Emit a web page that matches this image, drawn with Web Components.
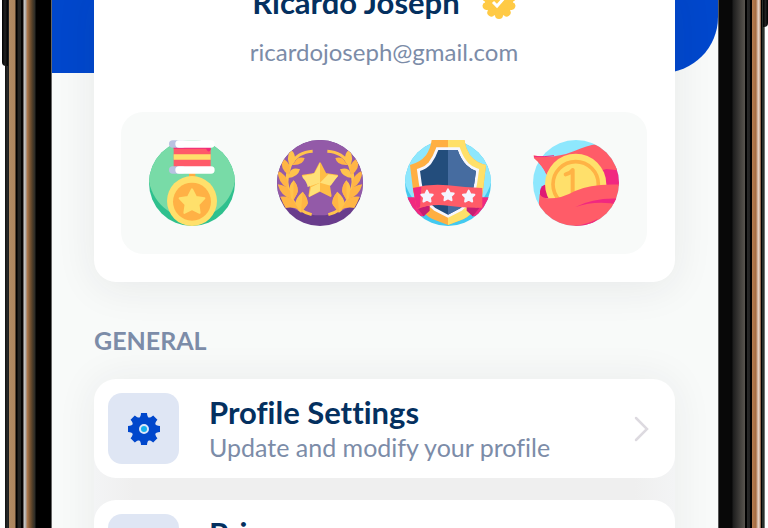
<!DOCTYPE html>
<html lang="en">
<head>
<meta charset="utf-8">
<title>Profile</title>
<style>
body { margin: 0; background: #fff; font-family: Lato, "Open Sans", sans-serif; font-variant-ligatures: none; color: #04305f; --muted: #7c8ca8; --blue: #0047cc; --soft: #f8faf9; }
</style>
</head>
<body>
<phone-frame>
  <profile-hero name="Ricardo Joseph" email="ricardojoseph@gmail.com">
    <medal-icon kind="ribbon"></medal-icon>
    <medal-icon kind="laurel"></medal-icon>
    <medal-icon kind="shield"></medal-icon>
    <medal-icon kind="coin"></medal-icon>
  </profile-hero>
  <settings-section heading="General">
    <settings-row>Profile Settings<span slot="detail">Update and modify your profile</span><gear-icon slot="icon"></gear-icon></settings-row>
    <settings-row>Privacy</settings-row>
  </settings-section>
</phone-frame>
<script>
class BaseElement extends HTMLElement {
  connectedCallback() {
    if (this.shadowRoot) return;
    this.attachShadow({ mode: 'open' }).innerHTML = this.render();
  }
}

customElements.define('phone-frame', class extends BaseElement {
  render() {
    return `<style>
      :host { display: flex; height: 100vh; overflow: hidden; }
      .edge { flex: none; position: relative; }
      .left { width: 52px; background: linear-gradient(90deg, #fff 5px, #111 5px, #2b2c2c 8px, #111 9px, #b08a63 9px, #ab845d 15px, #000 16px, #000 17px, #222322 18px, #222322 21px, #000 21px, #0a0404 23px, #cfcdcb 24px, #aaa5a2 26px, #b37c50 27px, #7a5532 30px, #453827 33px, #2a2b28 35px, #000 36px, #000 51px, #666 51px); }
      .right { width: 50px; background: linear-gradient(90deg, #555 1px, #080808 1px, #080808 14px, #1d1d1d 15px, #59554f 27px, #000 27px, #000 29px, #292929 29px, #222 32px, #000 32px, #000 34px, #b47c50 34px, #a46c42 38px, #c9a48b 39px, #eadbd1 41px, #b98a6b 42px, #6e4a33 43px, #000 43px, #000 44px, #2b302b 44px, #2b302b 46px, #bbb 47px, #fff 47px); }
      .key { position: absolute; top: 0; background: linear-gradient(90deg, #000, #222 50%, #000); }
      .left .key { left: 2px; width: 6px; height: 66px; border-radius: 0 0 0 4px; }
      .right .key { right: 0; width: 5px; height: 27px; border-radius: 0 0 4px 0; }
      .screen { flex: 1; min-width: 0; display: grid; grid-template: auto 1fr / 100%; background: var(--soft); overflow: hidden; }
      .banner { grid-area: 1 / 1; align-self: start; height: 73px; background: var(--blue); border-radius: 0 0 56px 0; }
      main { grid-area: 1 / 1 / 3 / 2; padding: 0 43px 0 42px; position: relative; }
    </style>
    <div class="edge left"><div class="key"></div></div>
    <div class="screen"><div class="banner"></div><main><slot></slot></main></div>
    <div class="edge right"><div class="key"></div></div>`;
  }
});

customElements.define('profile-hero', class extends BaseElement {
  render() {
    return `<style>
      :host { display: block; background: #fff; padding: 0 28px 28px 27px; border-radius: 0 0 22px 22px; box-shadow: 0 6px 40px rgba(40,40,55,.08); }
      .name { display: flex; justify-content: center; align-items: center; gap: 22px; margin-top: -16px; }
      h1 { margin: 0; font-size: 31px; line-height: 36px; font-weight: 700; }
      svg { display: block; width: 34px; height: 34px; }
      a { display: block; text-align: center; text-decoration: none; color: var(--muted); font-size: 24px; line-height: 32px; margin-top: 16px; }
      .badges { display: flex; justify-content: space-between; background: var(--soft); border-radius: 22px; padding: 28px; margin-top: 44px; }
    </style>
    <div class="name"><h1>${this.getAttribute('name')}</h1>
      <svg viewBox="-17 -17 34 34" role="img" aria-label="Verified"><g fill="#ffca45"><circle r="14"/>
      ${Array.from({ length: 10 }, (_, i) => `<circle cx="0" cy="13" r="4" transform="rotate(${i * 36})"/>`).join('')}</g>
      <path d="M-6 0L-2 4L6-5" fill="none" stroke="#fff" stroke-width="3"/></svg></div>
    <a href="mailto:${this.getAttribute('email')}">${this.getAttribute('email')}</a>
    <div class="badges"><slot></slot></div>`;
  }
});

const star = (x, y, r, fill, k = 0.5) => {
  const p = Array.from({ length: 10 }, (_, i) => {
    const a = (i * 36 - 90) * Math.PI / 180, q = i % 2 ? r * k : r;
    return `${(x + q * Math.cos(a)).toFixed(1)},${(y + q * Math.sin(a)).toFixed(1)}`;
  }).join(' ');
  return `<polygon points="${p}" fill="${fill}" stroke="${fill}" stroke-width="6" stroke-linejoin="round"/>`;
};

const laurelSide = `<path d="M134 63Q88 65 67 105Q45 155 70 205Q90 243 131 253" fill="none" stroke="#ffc34c" stroke-width="9"/>
  <path d="M67 57Q84 70 81 91Q77 102 68 108Q52 88 67 57Z" fill="#ffc34c"/>
  <path d="M83 91Q91 78 110 83Q105 106 73 104Z" fill="#ffb545"/>
  <path d="M42 83Q61 93 65 108Q67 122 62 133Q35 118 42 83Z" fill="#ffb545"/>
  <path d="M65 126Q72 110 96 117Q90 141 59 143Z" fill="#ffc34c"/>
  <path d="M29 121Q51 131 58 149Q61 164 59 174Q30 158 29 121Z" fill="#ffb545"/>
  <path d="M77 150Q95 173 87 190L76 210Q60 203 62 187Q63 163 77 150Z" fill="#ffc34c"/>
  <path d="M77 150Q95 173 87 190L76 210Z" fill="#ffb545"/>
  <path d="M29 162Q53 164 66 181L69 205Q39 198 29 162Z" fill="#ffb545"/>
  <path d="M104 184Q125 210 117 224L99 247Q81 234 82 220Q83 202 104 184Z" fill="#ffc34c"/>
  <path d="M104 184Q125 210 117 224L99 247Z" fill="#ffb545"/>
  <path d="M37 199Q67 197 76 211L93 238Q75 229 53 233Q44 218 37 199Z" fill="#ffb545"/>`;

const shieldPath = 'M107 29H205Q208 52 222 75Q241 98 270 104L261 178Q253 238 203 266L156 284L109 266Q61 240 51 178L42 104Q72 97 90 75Q104 54 107 29Z';
const innerPath = 'M127 59H185Q194 86 211 104Q225 117 240 122L235 158Q229 209 194 233L156 253L118 233Q82 208 77 158L72 122Q92 116 105 101Q119 82 127 59Z';

const medals = {
  ribbon: `<g clip-path="url(#disc)"><rect x="20" y="20" width="280" height="280" fill="#2fc08e"/><ellipse cx="156" cy="129" rx="131" ry="134" fill="#78dba7"/></g>
    <path d="M147 126H166V147H147Z" fill="#ffad42"/>
    <path d="M101 48H212V111H101Z" fill="#ff5b69"/><path d="M101 50H212V58Q206 70 198 55H101Z" fill="#f02a7b"/><path d="M101 72H212V88H101Z" fill="#ffe06b"/>
    <rect x="87" y="30" width="50" height="22" rx="11" fill="#b9c2e2"/><rect x="106" y="30" width="118" height="22" rx="11" fill="#fff"/>
    <rect x="87" y="108" width="50" height="22" rx="11" fill="#b9c2e2"/><rect x="106" y="108" width="118" height="22" rx="11" fill="#fff"/>
    <circle cx="156" cy="212" r="75" fill="#ffe06b"/><circle cx="156" cy="214" r="57" fill="#ffb145"/>${star(156, 216, 39, '#ffe06b', 0.52)}`,
  laurel: `<g clip-path="url(#disc)"><rect x="20" y="20" width="280" height="280" fill="#693c8c"/><ellipse cx="156" cy="122" rx="150" ry="133" fill="#935aa8"/>
    ${laurelSide}<g transform="translate(312 0) scale(-1 1)">${laurelSide}</g></g>
    ${star(156, 153, 54, '#ffbd45', 0.51)}
    <path d="M156 97V157L130 132L140 128ZM104 136L132 132L156 157L119 170Q117 155 104 142ZM156 157L181 132L210 136L188 166ZM156 157V182L123 200L129 171Z" fill="#ffe077"/>`,
  shield: `<g clip-path="url(#disc)"><rect x="20" y="20" width="280" height="280" fill="#43c9f0"/><ellipse cx="156" cy="120" rx="134" ry="137" fill="#8ee7fd"/>
    <path d="M20 201H85V258H57L32 245ZM292 201H228V258H260L282 245Z" fill="#f12880"/></g>
    <clipPath id="half"><rect x="156" y="0" width="156" height="315"/></clipPath>
    <path d="${shieldPath}" fill="#ffaf42"/><path d="${shieldPath}" fill="#ffe069" clip-path="url(#half)"/>
    <path d="${innerPath}" fill="#234d7c" stroke="#f6f7ff" stroke-width="17"/>
    <path d="${innerPath}" fill="#234d7c"/><path d="${innerPath}" fill="#466ca0" clip-path="url(#half)"/>
    <path d="M64 233L101 225V241L83 258ZM250 233L212 225V241L230 258Z" fill="#c51e72"/>
    <path d="M51 173Q104 159 156 165Q207 172 259 173V232Q208 234 156 226Q104 219 62 237Z" fill="#ff5c68"/><path d="M51 173L76 169L72 230L62 237Z" fill="#f12880"/>
    ${star(93, 199, 18, '#f4f5ff')}${star(156, 195, 18, '#f4f5ff')}${star(218, 199, 18, '#f4f5ff')}`,
  coin: `<g clip-path="url(#disc)"><rect x="20" y="20" width="280" height="280" fill="#8ee7fd"/><path d="M230 113H300V166H230Z" fill="#f12880"/>
    <path d="M29 77Q94 86 151 62Q190 45 218 42Q278 65 282 120L247 116L100 158L67 132Q56 106 30 84Z" fill="#ff5c68"/></g>
    <path d="M29 75L60 81L80 108L67 132Q56 106 30 84Z" fill="#ff5c68"/><path d="M30 79Q65 80 90 76" stroke="#f12880" stroke-width="3" fill="none"/>
    <path d="M48 203V181Q51 165 68 162L77 203Z" fill="#df1974"/>
    <circle cx="155" cy="162" r="92" fill="#ffe06b"/><circle cx="155" cy="162" r="68" fill="none" stroke="#ffb345" stroke-width="11"/>
    <path d="M125 132Q141 127 146 119V190" fill="none" stroke="#ffb345" stroke-width="12" stroke-linecap="round" stroke-linejoin="round"/>
    <g clip-path="url(#disc)"><path d="M47 191Q55 205 76 204Q112 205 153 182Q204 158 292 163V292H70L44 225Z" fill="#ff5c68"/>
    <path d="M154 230Q211 200 292 205V224Q218 208 154 230ZM142 288Q190 283 222 265L207 282L160 293Z" fill="#f12880"/></g>`
};

customElements.define('medal-icon', class extends BaseElement {
  render() {
    return `<style>:host { display: block; width: 86px; height: 86px; } svg { display: block; width: 100%; height: 100%; }</style>
    <svg viewBox="27 29 258 258" aria-hidden="true"><defs><clipPath id="disc"><circle cx="156" cy="158" r="129"/></clipPath></defs>${medals[this.getAttribute('kind')]}</svg>`;
  }
});

customElements.define('gear-icon', class extends BaseElement {
  render() {
    return `<style>:host { display: block; } svg { display: block; width: 32px; height: 32px; }</style>
    <svg viewBox="-16 -16 32 32" aria-hidden="true"><g fill="#0047cc"><circle r="12"/>
    ${Array.from({ length: 8 }, (_, i) => `<path d="M-6-10Q-3-12-3-16H3Q3-12 6-10Z" transform="rotate(${i * 45})"/>`).join('')}</g>
    <circle r="4" fill="#16b1ee" stroke="#dce7f8" stroke-width="2"/></svg>`;
  }
});

customElements.define('settings-section', class extends BaseElement {
  render() {
    return `<style>
      :host { display: block; margin-top: 42px; }
      h2 { margin: 0 0 23px; color: var(--muted); font-size: 25px; line-height: 32px; font-weight: 700; text-transform: uppercase; }
      .list { display: grid; gap: 22px; border-radius: 22px; box-shadow: 0 0 40px rgba(40,40,55,.07); background: linear-gradient(90deg, #f3f4f5, #efefef 40px, #efefef calc(100% - 40px), #f3f4f5); }
    </style><h2>${this.getAttribute('heading')}</h2><div class="list"><slot></slot></div>`;
  }
});

customElements.define('settings-row', class extends BaseElement {
  render() {
    return `<style>
      :host { display: block; }
      button { box-sizing: border-box; width: 100%; display: flex; align-items: center; gap: 30px; padding: 14px; padding-right: 26px; border: 0; border-radius: 22px; background: #fff; font: inherit; font-variant-ligatures: none; color: inherit; text-align: left; }
      .tile { flex: none; display: grid; place-items: center; width: 71px; height: 71px; border-radius: 14px; background: #dfe6f4; }
      .copy { flex: 1; min-width: 0; }
      .title { display: block; font-size: 31px; line-height: 36px; font-weight: 700; }
      .detail { display: block; min-height: 34px; font-size: 25px; line-height: 34px; color: var(--muted); }
      svg { flex: none; display: block; width: 16px; height: 26px; }
    </style>
    <button type="button"><span class="tile"><slot name="icon"></slot></span>
      <span class="copy"><span class="title"><slot></slot></span><span class="detail"><slot name="detail"></slot></span></span>
      <svg viewBox="0 0 16 26" aria-hidden="true"><path d="M3 2L14 13L3 24" fill="none" stroke="#dddae0" stroke-width="2.500" stroke-linecap="round"/></svg></button>`;
  }
});
</script>
</body>
</html>
